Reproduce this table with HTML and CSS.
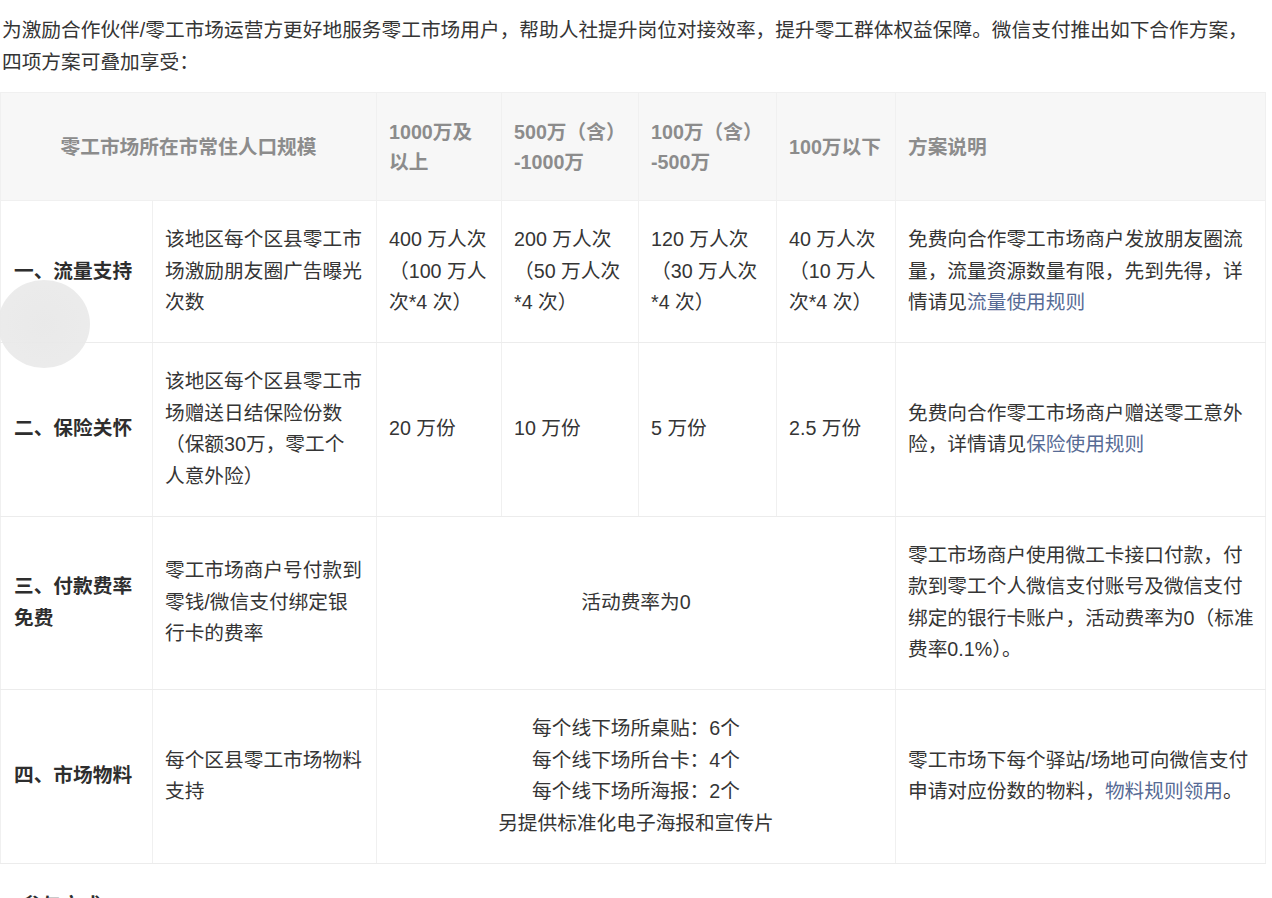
FILE: index.html
```html
<!DOCTYPE html>
<html lang="zh-CN">
<head>
<meta charset="utf-8">
<title>零工市场合作方案</title>
<link rel="stylesheet" href="styles.css">
</head>
<body>
<div class="page">
  <p class="intro">为激励合作伙伴/零工市场运营方更好地服务零工市场用户，帮助人社提升岗位对接效率，提升零工群体权益保障。微信支付推出如下合作方案，四项方案可叠加享受：</p>
  <table class="plan">
    <colgroup>
      <col class="c1"><col class="c2"><col class="c3"><col class="c4"><col class="c5"><col class="c6"><col class="c7">
    </colgroup>
    <thead>
      <tr>
        <th colspan="2" class="center">零工市场所在市常住人口规模</th>
        <th>1000万及<br>以上</th>
        <th>500万（含）<br>-1000万</th>
        <th>100万（含）<br>-500万</th>
        <th>100万以下</th>
        <th>方案说明</th>
      </tr>
    </thead>
    <tbody>
      <tr>
        <td class="name">一、流量支持</td>
        <td>该地区每个区县零工市场激励朋友圈广告曝光次数</td>
        <td>400 万人次（100 万人次*4 次）</td>
        <td>200 万人次（50 万人次*4 次）</td>
        <td>120 万人次（30 万人次*4 次）</td>
        <td>40 万人次（10 万人次*4 次）</td>
        <td class="desc">免费向合作零工市场商户发放朋友圈流量，流量资源数量有限，先到先得，详情请见<span class="link">流量使用规则</span></td>
      </tr>
      <tr>
        <td class="name">二、保险关怀</td>
        <td>该地区每个区县零工市场赠送日结保险份数（保额30万，零工个<br>人意外险）</td>
        <td>20 万份</td>
        <td>10 万份</td>
        <td>5 万份</td>
        <td>2.5 万份</td>
        <td class="desc">免费向合作零工市场商户赠送零工意外险，详情请见<span class="link">保险使用规则</span></td>
      </tr>
      <tr>
        <td class="name">三、付款费率免费</td>
        <td>零工市场商户号付款到零钱/微信支付绑定银行卡的费率</td>
        <td colspan="4" class="center">活动费率为0</td>
        <td class="desc">零工市场商户使用微工卡接口付款，付款到零工个人微信支付账号及微信支付绑定的银行卡账户，活动费率为0（标准费率0.1%）。</td>
      </tr>
      <tr>
        <td class="name">四、市场物料</td>
        <td>每个区县零工市场物料支持</td>
        <td colspan="4" class="center">每个线下场所桌贴：6个<br>每个线下场所台卡：4个<br>每个线下场所海报：2个<br>另提供标准化电子海报和宣传片</td>
        <td class="desc">零工市场下每个驿站/场地可向微信支付申请对应份数的物料，<span class="link">物料规则领用</span>。</td>
      </tr>
    </tbody>
  </table>
  <h3 class="section">2. 参与方式</h3>
  <div class="float-btn"></div>
</div>
</body>
</html>
```

FILE: styles.css
```css
html, body {
  margin: 0;
  padding: 0;
  background: #ffffff;
}

.page {
  position: relative;
  padding-top: 15px;
  font-family: "Liberation Sans", "Noto Sans CJK SC", sans-serif;
  font-size: 19.7px;
  color: #353535;
  line-height: 31.5px;
}

.intro {
  margin: 0 0 14px 0;
  padding: 0 0 0 2px;
  width: 1252px;
}

.plan {
  border-collapse: collapse;
  table-layout: fixed;
  width: 1265px;
}

.plan col.c1 { width: 152px; }
.plan col.c2 { width: 224px; }
.plan col.c3 { width: 125px; }
.plan col.c4 { width: 137px; }
.plan col.c5 { width: 138px; }
.plan col.c6 { width: 119px; }
.plan col.c7 { width: 370px; }

.plan th,
.plan td {
  border: 1px solid #f0f0f0;
  padding: 23px 12px 23.5px 12px;
  text-align: left;
  vertical-align: middle;
}

.plan th {
  background: #f7f7f7;
  color: #8c8c8c;
  font-weight: bold;
  line-height: 30px;
  padding-top: 23.5px;
  padding-bottom: 23.5px;
}

.plan td {
  border-top-color: #ececec;
  border-bottom-color: #ececec;
}

.plan .center {
  text-align: center;
}

.plan td.name {
  font-weight: bold;
  color: #2e2e2e;
  padding-left: 13px;
  padding-right: 13px;
}

.plan td.desc {
  padding-right: 8px;
}

.link {
  color: #576b95;
}

.section {
  margin: 26px 0 0 0;
  font-size: 19.7px;
  font-weight: bold;
  line-height: 31.5px;
  color: #2e2e2e;
}

.float-btn {
  position: absolute;
  left: -2px;
  top: 280px;
  width: 92px;
  height: 88px;
  border-radius: 50%;
  background: radial-gradient(circle at 50% 50%, rgba(232,232,232,0.95) 0%, rgba(234,234,234,0.92) 85%, rgba(236,236,236,0.6) 100%);
}
```
